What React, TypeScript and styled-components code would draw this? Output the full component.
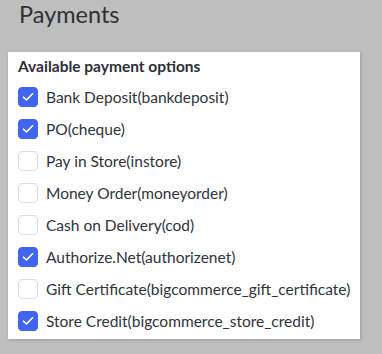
import React from "react";
import styled, { createGlobalStyle } from "styled-components";

const Global = createGlobalStyle`
  html, body { margin: 0; padding: 0; background: #bebebe; }
  body { font-family: Lato, "Open Sans", sans-serif; }
`;

const Page = styled.div`
  padding: 0 22px 15px 8px;
  width: 382px;
  box-sizing: border-box;
`;

const Title = styled.h1`
  margin: 0;
  padding: 0 0 0 11px;
  height: 52px;
  font-size: 23.5px;
  font-weight: 400;
  line-height: 28px;
  color: #2f3033;
`;

const Card = styled.div`
  background: #fff;
  box-shadow: 1px 1px 3px rgba(0, 0, 0, 0.18);
  padding: 4px 10px 8px 10px;
`;

const Heading = styled.div`
  font-size: 15.5px;
  font-weight: 700;
  color: #2d2f36;
  line-height: 20px;
  margin-bottom: 11px;
`;

const List = styled.div`
  display: flex;
  flex-direction: column;
  gap: 12px;
`;

const Row = styled.label`
  display: flex;
  align-items: center;
  gap: 8px;
  height: 20px;
`;

const Box = styled.span<{ $checked: boolean }>`
  width: 20px;
  height: 20px;
  box-sizing: border-box;
  border-radius: 4px;
  flex: none;
  display: flex;
  align-items: center;
  justify-content: center;
  background: ${(p) => (p.$checked ? "#4265f0" : "#fff")};
  border: 1px solid ${(p) => (p.$checked ? "#4265f0" : "#d8dbe8")};
`;

const Label = styled.span`
  font-size: 15.5px;
  color: #30333d;
  white-space: nowrap;
`;

const options: [string, boolean][] = [
  ["Bank Deposit(bankdeposit)", true],
  ["PO(cheque)", true],
  ["Pay in Store(instore)", false],
  ["Money Order(moneyorder)", false],
  ["Cash on Delivery(cod)", false],
  ["Authorize.Net(authorizenet)", true],
  ["Gift Certificate(bigcommerce_gift_certificate)", false],
  ["Store Credit(bigcommerce_store_credit)", true],
];

const Check = () => (
  <svg width="12" height="10" viewBox="0 0 12 10" fill="none">
    <path d="M1.5 5.2 L4.5 8 L10.5 1.8" stroke="#fff" strokeWidth="1.6" strokeLinecap="round" strokeLinejoin="round" />
  </svg>
);

export default function App() {
  return (
    <Page>
      <Global />
      <Title>Payments</Title>
      <Card>
        <Heading>Available payment options</Heading>
        <List>
          {options.map(([name, checked]) => (
            <Row key={name}>
              <Box $checked={checked}>{checked && <Check />}</Box>
              <Label>{name}</Label>
            </Row>
          ))}
        </List>
      </Card>
    </Page>
  );
}
